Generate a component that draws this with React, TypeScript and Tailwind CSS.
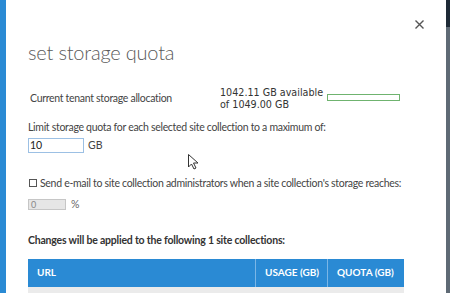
export default function App() {
  return (
    <div className="flex h-[293px] w-[450px] overflow-hidden bg-white font-['Lato',sans-serif] text-[#444]">
      <div className="w-[6px] shrink-0 bg-[#2a8ad4]" />
      <div className="relative flex-1 pl-[22px] pr-[36px]">
        <button className="absolute right-[22px] top-[20px] leading-none">
          <svg width="9" height="9" viewBox="0 0 9 9" stroke="#555" strokeWidth="1.4">
            <path d="M0.5 0.5L8.5 8.5M8.5 0.5L0.5 8.5" />
          </svg>
        </button>
        <h1 className="mt-[39px] whitespace-nowrap text-[20px] font-light leading-[26px] tracking-[-0.2px] text-[#5a5a5a]">
          set storage quota
        </h1>
        <div className="mt-[22px] flex items-start">
          <div className="w-[192px] whitespace-nowrap pl-[2px] pt-[4px] text-[10.5px] leading-[14px] tracking-[-0.3px]">
            Current tenant storage allocation
          </div>
          <div className="whitespace-nowrap font-['DejaVu_Sans',sans-serif] text-[9.6px] leading-[12px] text-[#333]">
            1042.11 GB available
            <br />
            of 1049.00 GB
          </div>
          <div className="ml-[4px] mt-[7px] h-[7px] w-[73px] border border-[#6fb36f]" />
        </div>
        <div className="mt-[9px] whitespace-nowrap text-[10.5px] leading-[15px] tracking-[-0.3px]">
          Limit storage quota for each selected site collection to a maximum of:
        </div>
        <div className="mt-[3px] flex items-center gap-[4px]">
          <div className="h-[15px] w-[56px] border border-[#9cc0e4] pl-[1px] text-[10.5px] leading-[13px] text-[#222]">
            10
          </div>
          <span className="text-[10.5px]">GB</span>
        </div>
        <svg className="absolute left-[182px] top-[154px]" width="11" height="16" viewBox="0 0 11 16">
          <path d="M0.5 0.5V13L3.5 10L6 15L8 14L5.5 9H10Z" fill="white" stroke="#333" strokeWidth="1" />
        </svg>
        <div className="mt-[22px] flex items-center gap-[3px] whitespace-nowrap text-[10.5px] leading-[15px] tracking-[-0.3px]">
          <div className="ml-[1px] h-[8px] w-[8px] border border-[#555] bg-white" />
          <span>Send e-mail to site collection administrators when a site collection's storage reaches:</span>
        </div>
        <div className="mt-[6px] flex items-center gap-[5px]">
          <div className="h-[11px] w-[38px] border border-[#c6c6c6] bg-[#e6e6e6] pl-[2px] text-[9px] leading-[9px] text-[#888]">
            0
          </div>
          <span className="text-[10.5px] text-[#666]">%</span>
        </div>
        <div className="mt-[20px] whitespace-nowrap text-[10.5px] font-bold leading-[14px] tracking-[-0.2px] text-[#333]">
          Changes will be applied to the following 1 site collections:
        </div>
        <div className="mt-[12px] w-[376px]">
          <div className="flex h-[28px] items-center bg-[#2a8ad4] text-[10px] font-bold text-white">
            <div className="flex h-full w-[228px] items-center border-r border-[#7bb6e6] pl-[9px]">URL</div>
            <div className="flex h-full w-[72px] items-center border-r border-[#7bb6e6] pl-[9px]">USAGE (GB)</div>
            <div className="flex h-full flex-1 items-center pl-[9px]">QUOTA (GB)</div>
          </div>
          <div className="h-[10px] bg-[#ebebeb]" />
        </div>
      </div>
      <div className="flex w-[4px] shrink-0 flex-col">
        <div className="h-[27px] bg-[#1e2a36]" />
        <div className="flex-1 bg-[#5f6a75]" />
      </div>
    </div>
  );
}
